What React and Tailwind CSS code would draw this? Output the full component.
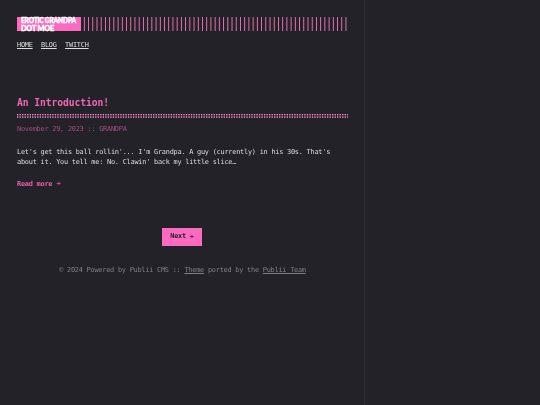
import { ArrowRight } from "lucide-react";

const menu = ["HOME", "BLOG", "TWITCH"];
const stripes = Array.from({ length: 63 }, (_, i) => 2.9 + i * 4.22);
const dots = Array.from({ length: 132 }, (_, i) => i * 2.52);

function Logo() {
  return (
    <a className="block h-[14.5px] w-[63.8px] shrink-0 bg-[#ff6ac1]">
      <svg
        viewBox="0 0 63.8 14.5"
        className="block h-full w-full overflow-visible fill-white stroke-white font-['Lato',sans-serif] text-[7.4px] font-black"
        strokeWidth="0.45"
      >
        <text x="4" y="5.8" textLength="55" lengthAdjust="spacingAndGlyphs">
          EROTIC GRANDPA
        </text>
        <text x="4" y="13.9" textLength="33" lengthAdjust="spacingAndGlyphs">
          DOT MOE
        </text>
      </svg>
    </a>
  );
}

function Header() {
  return (
    <header>
      <div className="flex">
        <Logo />
        <svg className="h-[14.5px] min-w-0 flex-1 fill-[#ff7ac8]">
          {stripes.map((x) => (
            <rect key={x} x={x} y="0" width="0.85" height="14.5" />
          ))}
        </svg>
      </div>
      <nav className="mt-[8.5px] flex gap-[8.4px] leading-[10px]">
        {menu.map((item) => (
          <a key={item} className="underline underline-offset-1">
            {item}
          </a>
        ))}
      </nav>
    </header>
  );
}

function Post() {
  return (
    <article className="mt-[46px]">
      <h2 className="text-[9.7px] leading-[13px] font-bold tracking-[-0.09px] text-[#ef65b6]">
        An Introduction!
      </h2>
      <svg className="mt-[5px] block h-[4px] w-full fill-[#ff8ccf]">
        {dots.map((x) => (
          <g key={x}>
            <rect x={x} y="0" width="1.35" height="1.4" />
            <rect x={x} y="2.4" width="1.35" height="1.4" />
          </g>
        ))}
      </svg>
      <p className="mt-[6px] leading-[10px] text-[#a54c83]">
        November 29, 2023 :: GRANDPA
      </p>
      <p className="mt-[13px] leading-[10px]">
        Let's get this ball rollin'... I'm Grandpa. A guy (currently) in his
        30s. That's about it. You tell me: No. Clawin' back my little slice…
      </p>
      <a className="mt-3 flex items-center leading-[10px] font-bold text-[#e361ad]">
        Read more
        <ArrowRight className="mb-px ml-[3.6px] h-[5px] w-[5px]" strokeWidth={3.5} />
      </a>
    </article>
  );
}

export default function App() {
  return (
    <div className="flex h-screen overflow-hidden bg-[#232228] font-['DejaVu_Sans_Mono',monospace] text-[6.9px] tracking-[-0.235px] text-[#dededf]">
      <div className="w-[365px] border-r border-[#2d2c33] pt-[16.5px] pr-4 pl-[17px] will-change-transform">
        <Header />
        <Post />
        <div className="mt-[39px] flex justify-center">
          <a className="mr-[0.6px] flex h-[18px] w-[39.5px] items-center justify-center bg-[#ff6ac1] font-bold text-[#222129]">
            Next
            <ArrowRight className="mb-px ml-[3.2px] h-[5px] w-[5px]" strokeWidth={3.5} />
          </a>
        </div>
        <footer className="mt-[19px] text-center leading-[10px] text-[#808084]">
          © 2024 Powered by Publii CMS ::{" "}
          <a className="underline underline-offset-1">Theme</a> ported by the{" "}
          <a className="underline underline-offset-1">Publii Team</a>
        </footer>
      </div>
    </div>
  );
}
